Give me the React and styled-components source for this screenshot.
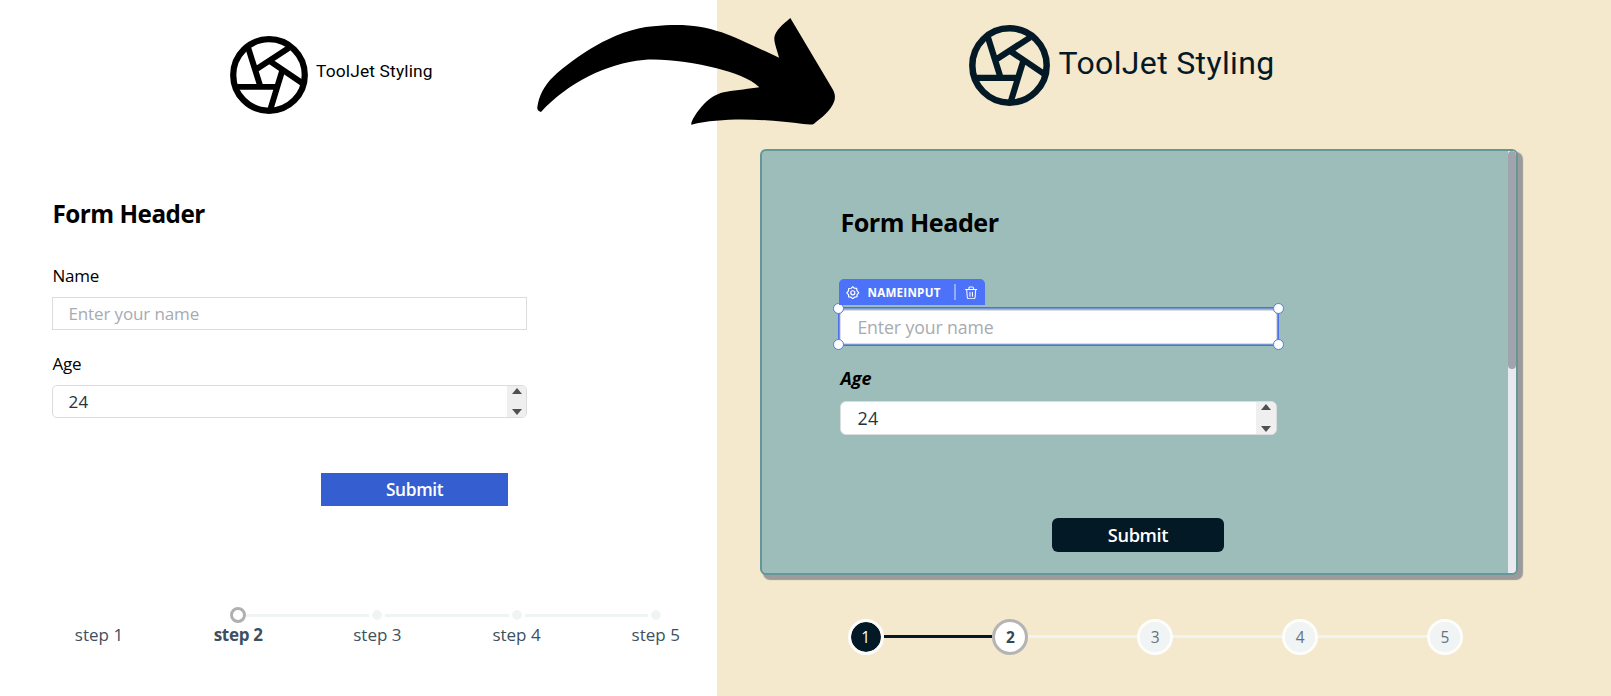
import React from "react";
import styled, { createGlobalStyle } from "styled-components";

const GlobalStyle = createGlobalStyle`
  *, *::before, *::after { box-sizing: border-box; }
  body {
    margin: 0;
    background: #fff;
    font-family: "Open Sans", "Noto Sans", sans-serif;
    color: #000;
  }
`;

const Page = styled.main`
  position: relative;
  display: flex;
  width: 1611px;
  height: 696px;
  overflow: hidden;
`;

const Pane = styled.section`
  display: flex;
  flex-direction: column;
  align-items: flex-start;
  flex: ${(p) => (p.$themed ? "1" : "0 0 717.4px")};
  min-width: 0;
  padding-left: ${(p) => (p.$themed ? "43px" : "0")};
  background: ${(p) => (p.$themed ? "#f4e8cd" : "#fff")};
`;

const Brand = styled.header`
  display: flex;
  align-items: flex-start;
  gap: ${(p) => (p.$large ? "9px" : "8.4px")};
  height: ${(p) => (p.$large ? "149px" : "196px")};
  padding: ${(p) => (p.$large ? "24.8px 0 0 208.2px" : "36px 0 0 229.6px")};
  color: ${(p) => (p.$large ? "#031a26" : "#000")};
`;

const BrandMark = styled.svg`
  flex: none;
  width: ${(p) => p.$size}px;
  height: ${(p) => p.$size}px;
  fill: none;
  stroke: currentColor;
`;

const BrandName = styled.span`
  margin-top: ${(p) => (p.$large ? "18px" : "22.8px")};
  font-family: Roboto, "Open Sans", sans-serif;
  font-size: ${(p) => (p.$large ? "32px" : "17.4px")};
  line-height: ${(p) => (p.$large ? "40px" : "24px")};
  letter-spacing: ${(p) => (p.$large ? "0.35px" : "0.15px")};
  white-space: nowrap;
`;

const PlainForm = styled.form`
  display: flex;
  flex-direction: column;
  width: 475px;
  height: 411px;
  margin-left: 52.4px;
`;

const FormTitle = styled.h2`
  margin: 0;
  font-size: ${(p) => p.$size}px;
  line-height: 36px;
  font-weight: 700;
  letter-spacing: -0.5px;
  white-space: nowrap;
`;

const Label = styled.label`
  margin-top: ${(p) => p.$top}px;
  font-size: ${(p) => (p.$emphasis ? "18px" : "17px")};
  line-height: 24px;
  letter-spacing: ${(p) => (p.$emphasis ? "0" : "-0.2px")};
  font-weight: ${(p) => (p.$emphasis ? 700 : 400)};
  font-style: ${(p) => (p.$emphasis ? "italic" : "normal")};
`;

const Field = styled.div`
  display: flex;
  align-items: center;
  height: ${(p) => p.$height || 33}px;
  margin-top: ${(p) => p.$top || 0}px;
  padding-left: ${(p) => p.$inset || 15}px;
  overflow: hidden;
  border: 1.4px solid #dadcde;
  border-radius: ${(p) => p.$radius || 0}px;
  background: #fff;
  font-size: ${(p) => p.$size || 17}px;
  letter-spacing: ${(p) => (p.$placeholder ? "-0.12px" : "0.5px")};
  color: ${(p) => (p.$placeholder ? "#a7abb1" : "#253340")};
`;

const Spinner = styled.span`
  display: flex;
  flex-direction: column;
  align-items: center;
  justify-content: space-between;
  align-self: stretch;
  width: 19.6px;
  margin-left: auto;
  padding: 2px 0;
  background: #efefef;
`;

const Caret = styled.i`
  border: solid transparent;
  border-width: ${(p) => (p.$up ? "0 5px 6px" : "6px 5px 0")};
  border-color: ${(p) => (p.$up ? "transparent transparent #505050" : "#505050 transparent transparent")};
`;

const SubmitButton = styled.button`
  width: ${(p) => p.$width}px;
  height: ${(p) => (p.$dark ? 34 : 33)}px;
  margin: ${(p) => p.$offset};
  padding: 0;
  border: 0;
  border-radius: ${(p) => (p.$dark ? 6 : 0)}px;
  background: ${(p) => (p.$dark ? "#031a26" : "#355fd0")};
  color: #fff;
  font-family: inherit;
  font-size: ${(p) => (p.$dark ? 18.2 : 17.3)}px;
  font-weight: 600;
  letter-spacing: -0.35px;
`;

const Steps = styled.ol`
  display: grid;
  grid-template-columns: repeat(5, ${(p) => p.$column}px);
  margin: ${(p) => p.$top || 0}px 0 0;
  padding: 0 0 0 ${(p) => p.$inset}px;
  list-style: none;
`;

const Step = styled.li`
  display: flex;
  flex-direction: column;
  align-items: center;
`;

const Track = styled.div`
  display: flex;
  align-items: center;
  align-self: stretch;
`;

const Line = styled.span`
  flex: 1;
  height: 3px;
  background: ${(p) => p.$color};
`;

const Dot = styled.span`
  width: 16px;
  height: 16px;
  border: 3px solid ${(p) => (p.$active ? "#b0b0b0" : "#fff")};
  border-radius: 50%;
  background: ${(p) => (p.$active ? "#fff" : "#f0f4f5")};
  background-clip: padding-box;
  visibility: ${(p) => (p.$hidden ? "hidden" : "visible")};
`;

const StepLabel = styled.span`
  font-size: 17px;
  line-height: 24px;
  letter-spacing: ${(p) => (p.$active ? "-0.3px" : "0")};
  font-weight: ${(p) => (p.$active ? 700 : 400)};
  color: #3d5060;
`;

const Bullet = styled.span`
  display: flex;
  align-items: center;
  justify-content: center;
  width: 36px;
  height: 36px;
  border: 3px solid ${(p) => (p.$active ? "#b4b4b4" : "#fdfdfc")};
  border-radius: 50%;
  background: ${(p) => (p.$done ? "#031a26" : p.$active ? "#fff" : "#f0f4f5")};
  background-clip: padding-box;
  color: ${(p) => (p.$done ? "#fff" : p.$active ? "#364858" : "#67727d")};
  font-size: 15.5px;
  font-weight: ${(p) => (p.$active ? 700 : 400)};
`;

const Card = styled.div`
  display: flex;
  width: 757.4px;
  height: 425.6px;
  overflow: hidden;
  border: 2px solid #659799;
  border-radius: 6px;
  background: #9dbdba;
  box-shadow: 4px 4px 1px 1px #9b9b9b;
`;

const CardForm = styled.form`
  display: flex;
  flex-direction: column;
  flex: none;
  width: 436.5px;
  margin-left: 78px;
  padding-top: 52.5px;
`;

const Scrollbar = styled.div`
  width: 8px;
  margin-left: auto;
  background: #e8eaef;
`;

const Thumb = styled.div`
  height: 218.4px;
  border-radius: 4px;
  background: #a2a4ad;
`;

const Selected = styled.div`
  position: relative;
  margin-top: 70.6px;
`;

const Outline = styled.div`
  position: absolute;
  inset: -3px -2.4px -2.6px -2.6px;
  border: 1.4px solid #4a70ec;
  box-shadow: inset 0 0 0 0.5px #4a70ec;
`;

const Handle = styled.span`
  position: absolute;
  ${(p) => p.$v}: -4.9px;
  ${(p) => p.$h}: -5.4px;
  width: 11px;
  height: 11px;
  border: 1.5px solid #5079f2;
  border-radius: 50%;
  background: #fff;
`;

const Tag = styled.div`
  position: absolute;
  left: -1.8px;
  bottom: 100%;
  display: flex;
  align-items: center;
  width: 146px;
  height: 26px;
  margin-bottom: 4.8px;
  padding-left: 7.8px;
  border-radius: 5px 5px 0 0;
  background: #4d72fa;
  color: #fff;
`;

const TagName = styled.span`
  width: 77px;
  margin-left: 7.5px;
  font-size: 11.6px;
  font-weight: 700;
  letter-spacing: 0.25px;
  white-space: nowrap;
`;

const TagDivider = styled.span`
  width: 2.4px;
  height: 16px;
  margin: 0 8.5px 0 9.2px;
  background: #93abfc;
`;

const TagIcon = styled.svg`
  flex: none;
  width: ${(p) => p.$w || 13.6}px;
  height: 13.6px;
  fill: none;
  stroke: currentColor;
  stroke-linecap: round;
  stroke-linejoin: round;
`;

const Arrow = styled.svg`
  position: absolute;
  left: 536px;
  top: 16px;
  width: 300px;
  height: 110px;
`;

function Aperture({ size }) {
  return (
    <BrandMark $size={size} viewBox="55 44.5 243 243" aria-hidden="true">
      <circle cx="176.5" cy="166" r="111.5" strokeWidth="19.5" />
      <path
        strokeWidth="18.5"
        d="M112 82L150 203M238 82L138 147M283 193L178 122M181 272L217 155M78 203L204 203"
      />
    </BrandMark>
  );
}

function NumberField(props) {
  return (
    <Field {...props}>
      24
      <Spinner>
        <Caret $up />
        <Caret />
      </Spinner>
    </Field>
  );
}

function GearIcon() {
  return (
    <TagIcon viewBox="0 0 24 24" strokeWidth="2.1">
      <path d="M12 1.4L14.9 4L18.8 4.2L19.5 8.2L22.6 12L19.5 15.2L19.5 19L15.2 19.6L12 22.6L8.8 19.6L4.8 19.4L4.4 15.2L1.4 12L4.4 8.4L4.8 4.4L9.1 4Z" />
      <circle cx="12" cy="12" r="3.6" />
    </TagIcon>
  );
}

function TrashIcon() {
  return (
    <TagIcon $w={12.4} viewBox="1 0 22 24" strokeWidth="1.8">
      <path d="M2 6H22M8 6V3.5Q8 1.5 10 1.5H14Q16 1.5 16 3.5V6M4 6L5 20Q5.3 22.5 7.5 22.5H16.5Q18.7 22.5 19 20L20 6M9.8 11V18M14.2 11V18" />
    </TagIcon>
  );
}

const pale = "#f0f4f5";
const navy = "#031a26";

export default function App() {
  return (
    <Page>
      <GlobalStyle />
      <Pane>
        <Brand>
          <Aperture size={78} />
          <BrandName>ToolJet Styling</BrandName>
        </Brand>
        <PlainForm>
          <FormTitle $size={24.3}>Form Header</FormTitle>
          <Label $top={31.5}>Name</Label>
          <Field $top={9.5} $placeholder>Enter your name</Field>
          <Label $top={21.9}>Age</Label>
          <NumberField $top={8.8} $radius={5} />
          <SubmitButton type="button" $width={187.2} $offset="55.2px 0 0 268.6px">
            Submit
          </SubmitButton>
        </PlainForm>
        <Steps $column={139.2} $inset={29.4}>
          {[1, 2, 3, 4, 5].map((n) => (
            <Step key={n}>
              <Track>
                <Line $color={n > 2 ? pale : "transparent"} />
                <Dot $active={n === 2} $hidden={n === 1} />
                <Line $color={n > 1 && n < 5 ? pale : "transparent"} />
              </Track>
              <StepLabel $active={n === 2}>step {n}</StepLabel>
            </Step>
          ))}
        </Steps>
      </Pane>
      <Pane $themed>
        <Brand $large>
          <Aperture size={81} />
          <BrandName $large>ToolJet Styling</BrandName>
        </Brand>
        <Card>
          <CardForm>
            <FormTitle $size={25.2}>Form Header</FormTitle>
            <Selected>
              <Field $height={33.8} $inset={16} $radius={5} $size={17.7} $placeholder>
                Enter your name
              </Field>
              <Outline>
                <Handle $v="top" $h="left" />
                <Handle $v="top" $h="right" />
                <Handle $v="bottom" $h="left" />
                <Handle $v="bottom" $h="right" />
              </Outline>
              <Tag>
                <GearIcon />
                <TagName>NAMEINPUT</TagName>
                <TagDivider />
                <TrashIcon />
              </Tag>
            </Selected>
            <Label $emphasis $top={22.3}>Age</Label>
            <NumberField $top={11.3} $height={34} $inset={16} $radius={6} $size={17.9} />
            <SubmitButton type="button" $dark $width={171.6} $offset="83px 0 0 211.8px">
              Submit
            </SubmitButton>
          </CardForm>
          <Scrollbar>
            <Thumb />
          </Scrollbar>
        </Card>
        <Steps $column={144.8} $inset={32.9} $top={44.4}>
          {[1, 2, 3, 4, 5].map((n) => (
            <Step key={n}>
              <Track>
                <Line $color={n === 1 ? "transparent" : n === 2 ? navy : pale} />
                <Bullet $done={n === 1} $active={n === 2}>{n}</Bullet>
                <Line $color={n === 5 ? "transparent" : n === 1 ? navy : pale} />
              </Track>
            </Step>
          ))}
        </Steps>
      </Pane>
      <Arrow viewBox="48 48 900 330" aria-hidden="true">
        <path d="M52 322C56 290 72 256 100 230C160 175 280 88 400 79C480 70 540 75 605 97C650 113 700 138 777 173C772 150 762 130 763 112C767 90 788 74 811 54L938 268C948 285 946 300 938 314C925 338 900 356 882 371C874 376 862 373 850 372C760 360 620 348 514 374C511 366 530 335 552 312C575 288 595 279 620 275C650 271 690 266 718 262C690 235 640 218 590 205C520 187 430 175 370 180C260 190 145 248 63 336C55 333 51 330 52 322Z" />
      </Arrow>
    </Page>
  );
}
